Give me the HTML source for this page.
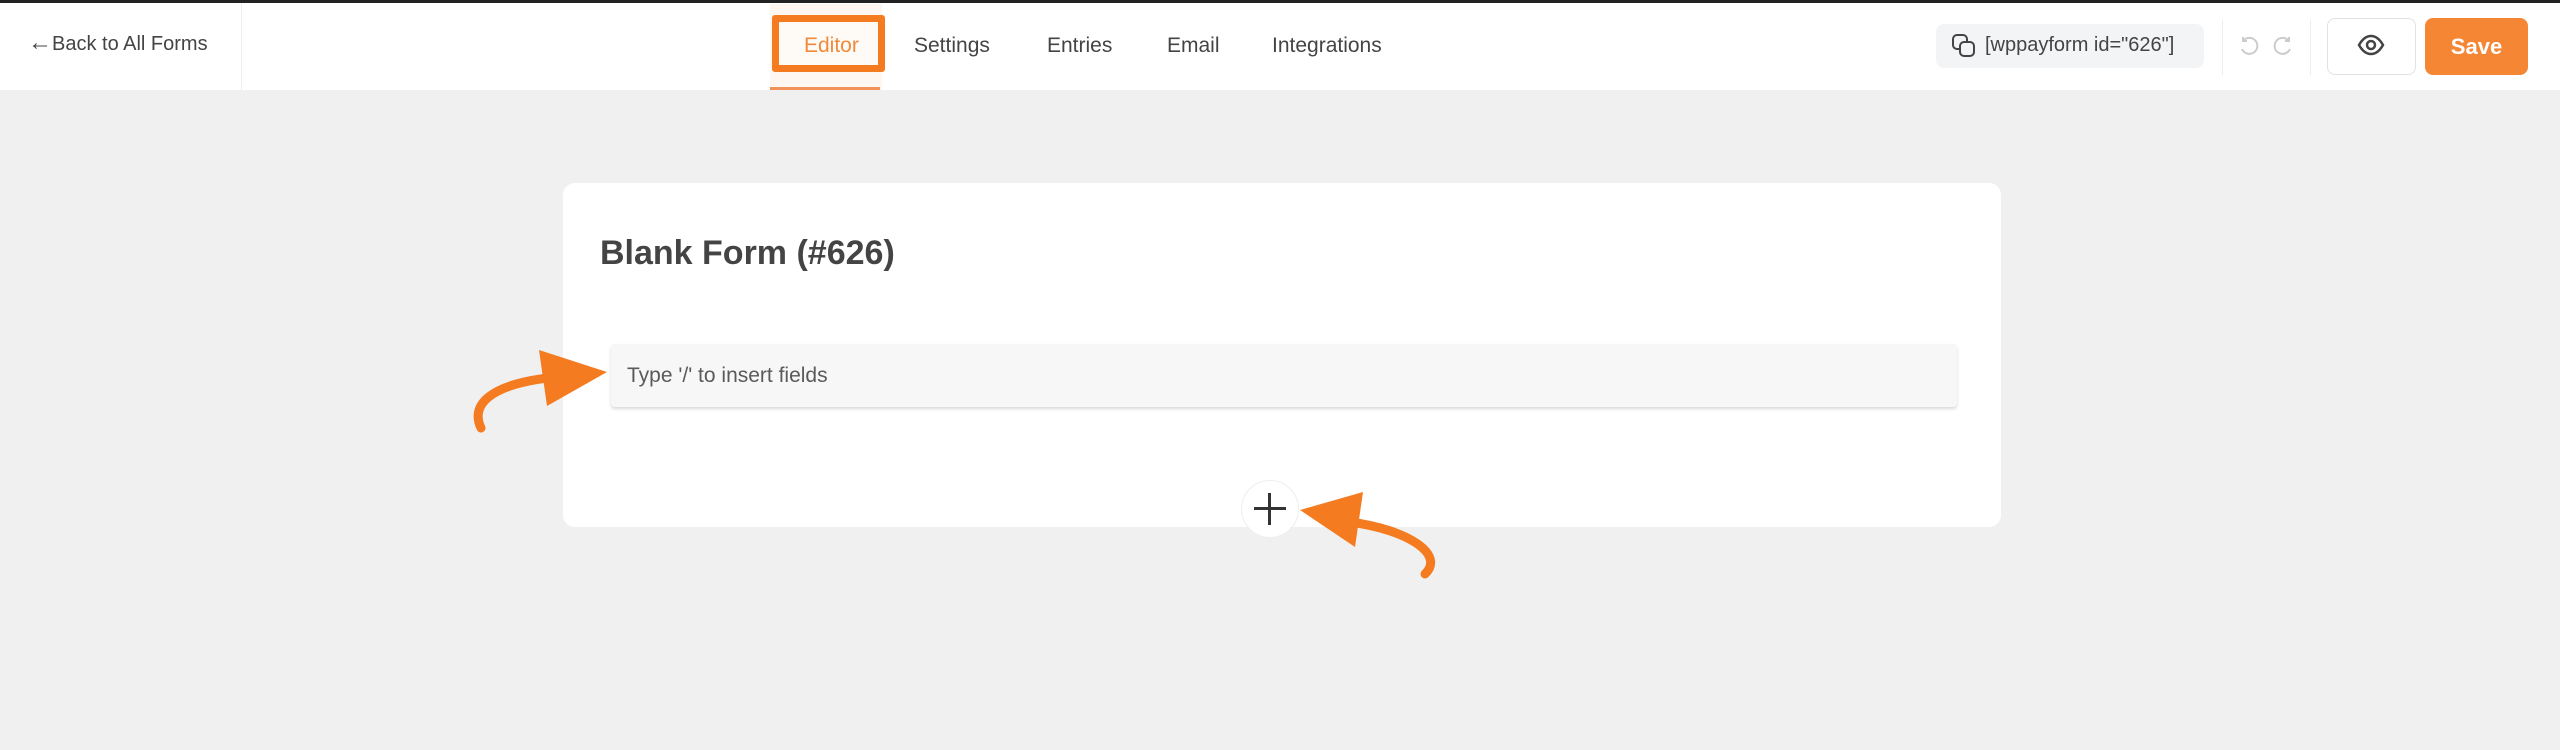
<!DOCTYPE html>
<html><head><meta charset="utf-8"><style>
*{box-sizing:border-box;margin:0;padding:0}
body{width:2560px;height:750px;background:#f0f0f0;font-family:"Liberation Sans",sans-serif;position:relative;overflow:hidden}
.abs{position:absolute}
.top{left:0;top:0;width:2560px;height:3px;background:#222}
.hdr{left:0;top:3px;width:2560px;height:87px;background:#fff}
.t{font-size:21px;color:#444;top:34px;white-space:nowrap}
</style></head><body>
<div class="abs top"></div>
<div class="abs hdr"></div>
<div class="abs" style="left:241px;top:3px;width:1px;height:87px;background:#eee"></div>
<div class="abs t" style="left:28px;top:33px;font-size:20px"><span style="font-size:24px;line-height:20px">←</span>Back to All Forms</div>
<div class="abs" style="left:770px;top:4px;width:112px;height:86px;background:#fef7f1"></div>
<div class="abs" style="left:772px;top:15px;width:113px;height:57px;border:7px solid #f47b20;border-radius:3px;background:#fefaf6"></div>
<div class="abs" style="left:770px;top:87px;width:110px;height:3px;background:#f0915a"></div>
<div class="abs t" style="left:804px;color:#f08a3c">Editor</div>
<div class="abs t" style="left:914px">Settings</div>
<div class="abs t" style="left:1047px">Entries</div>
<div class="abs t" style="left:1167px">Email</div>
<div class="abs t" style="left:1272px">Integrations</div>
<div class="abs" style="left:1936px;top:24px;width:268px;height:44px;background:#f3f4f6;border-radius:8px"></div>
<svg class="abs" style="left:1951px;top:33px" width="26" height="26" viewBox="0 0 26 26" fill="none" stroke="#444" stroke-width="2"><rect x="2" y="2" width="14" height="14" rx="4"/><rect x="9" y="9" width="14" height="14" rx="4" fill="#f3f4f6"/></svg>
<div class="abs t" style="left:1985px;top:34px;font-size:20px">[wppayform id="626"]</div>
<div class="abs" style="left:2222px;top:20px;width:1px;height:55px;background:#eee"></div>
<svg class="abs" style="left:2237px;top:34px" width="24" height="24" viewBox="0 0 24 24" fill="none" stroke="#ccc" stroke-width="2"><path d="M6 7A8 8 0 1 1 5 15"/><path d="M6 3v4h4"/></svg>
<svg class="abs" style="left:2271px;top:34px" width="24" height="24" viewBox="0 0 24 24" fill="none" stroke="#ccc" stroke-width="2"><path d="M18 7A8 8 0 1 0 19 15"/><path d="M18 3v4h-4"/></svg>
<div class="abs" style="left:2310px;top:20px;width:1px;height:55px;background:#eee"></div>
<div class="abs" style="left:2327px;top:18px;width:89px;height:57px;border:1px solid #e2e2e2;border-radius:8px;background:#fff"></div>
<svg class="abs" style="left:2357px;top:34px" width="28" height="22" viewBox="0 0 28 22" fill="none" stroke="#444" stroke-width="2.5"><path d="M2 11C6 4 10 2 14 2s8 2 12 9c-4 7-8 9-12 9S6 18 2 11z"/><circle cx="14" cy="11" r="4"/></svg>
<div class="abs" style="left:2425px;top:18px;width:103px;height:57px;background:#f58634;border-radius:8px;color:#fff;font-weight:bold;font-size:22px;text-align:center;line-height:57px">Save</div>

<div class="abs" style="left:563px;top:183px;width:1438px;height:344px;background:#fff;border-radius:12px"></div>
<div class="abs" style="left:600px;top:234px;font-size:34px;font-weight:bold;color:#444">Blank Form (#626)</div>
<div class="abs" style="left:611px;top:344px;width:1346px;height:63px;background:#f7f7f7;border-radius:4px;box-shadow:0 2px 3px rgba(0,0,0,.15)"></div>
<div class="abs" style="left:627px;top:364px;font-size:21px;color:#5a5a5a">Type '/' to insert fields</div>
<div class="abs" style="left:1241px;top:480px;width:58px;height:58px;border-radius:50%;background:#fff;border:1px solid #eee"></div>
<div class="abs" style="left:1254px;top:507px;width:32px;height:3px;background:#333"></div>
<div class="abs" style="left:1268px;top:493px;width:3px;height:32px;background:#333"></div>
<svg class="abs" style="left:0;top:0" width="2560" height="750" viewBox="0 0 2560 750">
<path d="M481 428C470 405 490 385 548 378" fill="none" stroke="#f47b20" stroke-width="9" stroke-linecap="round"/>
<path d="M607 372L539 350L547 406Z" fill="#f47b20"/>
<path d="M1350 522C1410 530 1445 555 1425 574" fill="none" stroke="#f47b20" stroke-width="9" stroke-linecap="round"/>
<path d="M1300 510L1363 492L1355 547Z" fill="#f47b20"/>
</svg>
</body></html>
